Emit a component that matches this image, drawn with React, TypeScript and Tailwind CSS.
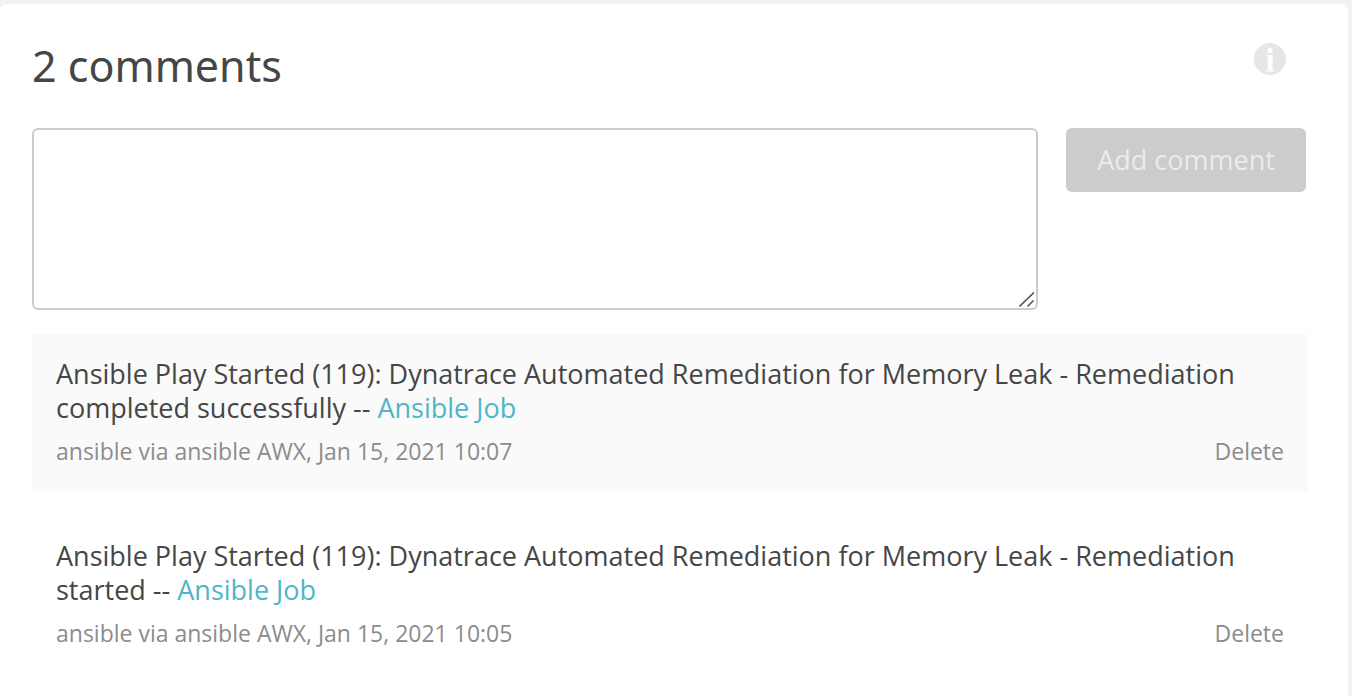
type Comment = {
  id: number;
  text: string;
  author: string;
};

const comments: Comment[] = [
  {
    id: 1,
    text: "Ansible Play Started (119): Dynatrace Automated Remediation for Memory Leak - Remediation completed successfully -- ",
    author: "ansible via ansible AWX, Jan 15, 2021 10:07",
  },
  {
    id: 2,
    text: "Ansible Play Started (119): Dynatrace Automated Remediation for Memory Leak - Remediation started -- ",
    author: "ansible via ansible AWX, Jan 15, 2021 10:05",
  },
];

function InfoIcon() {
  return (
    <svg viewBox="0 0 32 32" className="size-8" aria-hidden="true">
      <circle cx="16" cy="16" r="16" fill="#e6e6e6" />
      <circle cx="16" cy="7.4" r="2.7" fill="#fff" />
      <path d="M11.8 12h6.700v14.600q.4 1 2.300 1.100v.9h-9.400v-.9q1.900-.1 2.300-1.100V14.200q-.3-1-1.900-1.200z" fill="#fff" />
    </svg>
  );
}

function CommentItem({ comment }: { comment: Comment }) {
  return (
    <li className="px-6 pt-[23px] pb-[25px] odd:bg-[#fafafa]">
      <p className="text-[27px] leading-[34px] font-medium text-[#454646]">
        {comment.text}
        <a href="#job" className="text-[#4fb5c9]">Ansible Job</a>
      </p>
      <div className="mt-2.5 flex items-center justify-between text-[23px] leading-8 font-medium text-[#8c8c8c]">
        <span>{comment.author}</span>
        <button type="button">Delete</button>
      </div>
    </li>
  );
}

export default function App() {
  return (
    <div className="min-h-screen bg-[#f2f2f2] pt-1 pr-1 font-['Open_Sans','Noto_Sans',sans-serif]">
      <main className="min-h-[calc(100vh-4px)] rounded-t-md bg-white pt-8 pr-10 pb-6 pl-8">
        <header className="flex items-start justify-between pr-[22px]">
          <h1 className="font-['Noto_Sans',sans-serif] text-[43px] leading-[60px] font-normal text-[#454646]">2 comments</h1>
          <button type="button" aria-label="About comments" className="mt-[7px]">
            <InfoIcon />
          </button>
        </header>
        <form className="mt-8 flex items-start gap-7 pr-0.5">
          <div className="relative flex flex-1">
            <textarea
              aria-label="Comment"
              className="h-[182px] w-full resize-none rounded-md border-2 border-[#cccccc] bg-white p-3 text-[27px] leading-[34px] outline-none"
            />
            <svg
              viewBox="0 0 16 16"
              className="pointer-events-none absolute right-[3px] bottom-0.5 size-4"
              fill="none"
              stroke="#555"
              strokeWidth="1.6"
              aria-hidden="true"
            >
              <path d="M.5 14.500 15 .5M8.500 14.500l6-6" />
            </svg>
          </div>
          <button
            type="button"
            disabled
            className="h-16 w-60 rounded-md bg-[#cccccc] text-[27px] font-medium text-[#ebebeb]"
          >
            Add comment
          </button>
        </form>
        <ul className="mt-6 flex flex-col gap-6">
          {comments.map((comment) => (
            <CommentItem key={comment.id} comment={comment} />
          ))}
        </ul>
      </main>
    </div>
  );
}
